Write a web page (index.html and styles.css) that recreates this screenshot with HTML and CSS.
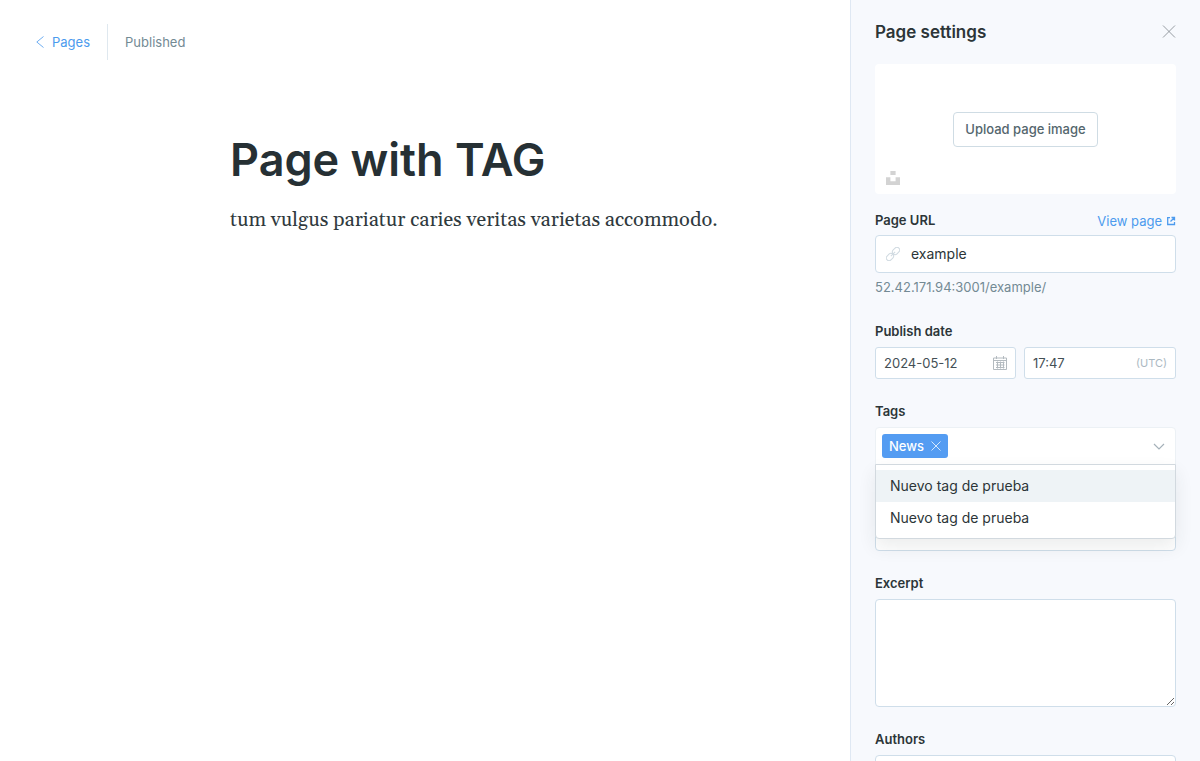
FILE: index.html
```html
<!DOCTYPE html>
<html lang="en">
<head>
<meta charset="utf-8">
<meta name="viewport" content="width=device-width, initial-scale=1">
<title>Page with TAG</title>
<link rel="stylesheet" href="styles.css">
</head>
<body>
<div class="app">
  <main class="editor">
    <header class="editor-header">
      <a class="back-link" href="#">
        <svg class="back-icon" viewBox="0 0 8 12" aria-hidden="true"><path d="M7.500 .5 .8 6l6.700 5.500"/></svg>
        Pages
      </a>
      <span class="status">Published</span>
    </header>
    <article class="post">
      <h1 class="post-title">Page with TAG</h1>
      <p class="post-body">tum vulgus pariatur caries veritas varietas accommodo.</p>
    </article>
  </main>

  <aside class="settings">
    <header class="settings-header">
      <h2 class="settings-title">Page settings</h2>
      <button class="close-button" type="button" aria-label="Close">
        <svg class="close-icon" viewBox="0 0 14 14" aria-hidden="true"><path d="M1 .5l12 12M13 .5l-12 12"/></svg>
      </button>
    </header>
    <form class="settings-form">
      <div class="uploader">
        <button class="upload-button" type="button">Upload page image</button>
        <button class="unsplash-button" type="button" aria-label="Unsplash">
          <svg class="unsplash-icon" viewBox="0 0 14 14" aria-hidden="true"><path d="M4.400 0h5.200v4H4.400zM0 6.200h4.400v4h5.200v-4H14V14H0z"/></svg>
        </button>
      </div>

      <div class="group">
        <div class="label-row">
          <label class="label" for="url">Page URL</label>
          <a class="view-link" href="#">View page
            <svg class="external-icon" viewBox="0 0 10 10" aria-hidden="true"><path d="M4 1.700H1.700v6.800h6.800V6M5.500 1.500h3v3M8.300 1.700 4.500 5.500"/></svg>
          </a>
        </div>
        <div class="field">
          <svg class="link-icon" viewBox="0 0 14 14" aria-hidden="true"><g transform="rotate(-45 7 7)"><rect x="-1.300" y="4.300" width="8" height="5.400" rx="2.700"/><rect x="7.300" y="4.300" width="8" height="5.400" rx="2.700"/><path d="M4 7h6"/></g></svg>
          <input class="field-input" id="url" type="text" value="example">
        </div>
        <p class="hint">52.42.171.94:3001/example/</p>
      </div>

      <div class="group">
        <label class="label" for="date">Publish date</label>
        <div class="date-row">
          <div class="field field-small">
            <input class="field-input" id="date" type="text" value="2024-05-12">
            <svg class="calendar-icon" viewBox="0 0 14 14" aria-hidden="true"><path d="M.5 2h13v11.500H.5zM.5 4.500h13M3.500 0v3M10.500 0v3M3 6.500h8.500M3 9h8.500M3 11.500h8.500M4.500 5.500v7M7.500 5.500v7M10.500 5.500v7"/></svg>
          </div>
          <div class="field field-small">
            <input class="field-input" type="text" value="17:47" aria-label="Time">
            <span class="timezone">(UTC)</span>
          </div>
        </div>
      </div>

      <div class="group">
        <label class="label" for="tags">Tags</label>
        <div class="field field-tags">
          <span class="tag">News
            <button class="tag-remove" type="button" aria-label="Remove News">
              <svg class="tag-remove-icon" viewBox="0 0 10 10" aria-hidden="true"><path d="M.5 .5l9 9M9.500 .5l-9 9"/></svg>
            </button>
          </span>
          <input class="field-input" id="tags" type="text">
          <svg class="chevron-icon" viewBox="0 0 12 7" aria-hidden="true"><path d="M1 1l5 5 5-5"/></svg>
          <ul class="menu" role="listbox">
            <li class="option option-active" role="option" aria-selected="true">Nuevo tag de prueba</li>
            <li class="option" role="option" aria-selected="false">Nuevo tag de prueba</li>
          </ul>
        </div>
      </div>

      <div class="group group-access">
        <select class="field access-select" aria-label="Page access"></select>
      </div>

      <div class="group">
        <label class="label" for="excerpt">Excerpt</label>
        <textarea class="field excerpt" id="excerpt"></textarea>
      </div>

      <div class="group">
        <label class="label" for="authors">Authors</label>
        <div class="field"><input class="field-input" id="authors" type="text"></div>
      </div>
    </form>
  </aside>
</div>
</body>
</html>
```
FILE: styles.css
```css
* { box-sizing: border-box; }

body {
  margin: 0;
  background: #fff;
  color: #2c3538;
  font-family: Inter, "Liberation Sans", sans-serif;
  font-size: 13px;
  line-height: 16px;
}

h1, h2, p, ul { margin: 0; padding: 0; }
a { text-decoration: none; }
button { margin: 0; padding: 0; border: 0; background: none; font: inherit; cursor: pointer; }
svg { display: block; flex: none; fill: none; stroke: currentColor; }

.app {
  display: grid;
  grid-template-columns: 1fr 350px;
  height: 100vh;
  overflow: hidden;
}

.editor-header {
  display: flex;
  align-items: center;
  padding: 24px 36px;
}
.back-link {
  display: flex;
  align-items: center;
  gap: 8px;
  height: 36px;
  padding-right: 17px;
  border-right: 1px solid #dfe8ef;
  color: #4c9bee;
}
.back-icon { width: 8px; height: 12px; opacity: .8; }
.status { padding-left: 17px; color: #738a94; }

.post { padding: 46px 24px 0 230px; }
.post-title {
  color: #263034;
  font-size: 45px;
  font-weight: 600;
  line-height: 60px;
}
.post-body {
  margin-top: 14px;
  color: #303a3e;
  font-family: Georgia, Gelasio, "Liberation Serif", serif;
  font-size: 20px;
  line-height: 32px;
}

.settings {
  padding: 16px 24px 0;
  border-left: 1px solid #dfe8f3;
  background: #f7f9fd;
  overflow: hidden;
}
.settings-header {
  display: flex;
  align-items: center;
  justify-content: space-between;
  height: 32px;
  margin-bottom: 16px;
}
.settings-title { font-size: 17px; font-weight: 600; line-height: 24px; }
.close-icon { width: 14px; height: 14px; color: #7d878b; stroke-width: .8; }

.uploader {
  position: relative;
  display: flex;
  align-items: center;
  justify-content: center;
  height: 130px;
  margin-bottom: 18px;
  border-radius: 4px;
  background: #fff;
}
.upload-button {
  height: 35px;
  padding: 0 11px;
  border: 1px solid #cfdce4;
  border-radius: 4px;
  color: #54666d;
  font-weight: 500;
}
.unsplash-button { position: absolute; left: 11px; bottom: 9px; }
.unsplash-icon { width: 14px; height: 14px; fill: #d3d3d3; stroke: none; }

.group { margin-bottom: 24px; }
.label { display: block; margin-bottom: 8px; font-weight: 600; line-height: 16px; }
.label-row { display: flex; justify-content: space-between; height: 23px; }
.view-link { display: flex; align-items: center; gap: 4px; height: 18px; color: #4c9bee; }
.external-icon { width: 10px; height: 10px; stroke-width: 1.3; }

.field {
  position: relative;
  display: flex;
  align-items: center;
  gap: 11px;
  width: 100%;
  height: 38px;
  padding: 0 10px;
  border: 1px solid #cfdeea;
  border-radius: 4px;
  background: #fff;
}
.field-input {
  flex: 1;
  width: 100%;
  min-width: 0;
  padding: 0;
  border: 0;
  outline: 0;
  background: none;
  color: #2c3538;
  font: inherit;
  font-size: 14px;
}
.link-icon { width: 14px; height: 14px; color: #d0dae1; }
.hint { margin-top: 4px; margin-bottom: 26px; color: #738a94; line-height: 20px; }

.date-row {
  display: grid;
  grid-template-columns: minmax(0, 141fr) minmax(0, 152fr);
  gap: 8px;
}
.field-small { height: 32px; padding: 0 8px; border-radius: 3px; }
.field-small .field-input { color: #444f55; font-size: 13px; }
.calendar-icon { width: 14px; height: 14px; color: #b4bbc0; stroke-width: 1; }
.timezone { color: #abb9c2; font-size: 11px; }

.field-tags {
  gap: 4px;
  padding: 0 10px 0 6px;
  border-color: #ecf1f5;
  border-radius: 4px 4px 0 0;
}
.tag {
  display: flex;
  align-items: center;
  gap: 7px;
  height: 24px;
  padding: 0 7px;
  border-radius: 3px;
  background: #549cf2;
  color: #fff;
  font-weight: 500;
}
.tag-remove { color: #d5e7fc; }
.tag-remove-icon { width: 10px; height: 10px; }
.chevron-icon { width: 12px; height: 7px; color: #a5b1b9; stroke-width: 1.2; }

.menu {
  position: absolute;
  z-index: 1;
  top: 100%;
  left: -1px;
  right: -1px;
  padding: 5px 0 4px;
  border: 1px solid #d2d9df;
  border-radius: 0 0 4px 4px;
  background: #fff;
  box-shadow: 0 8px 18px rgba(40, 50, 60, .09);
  list-style: none;
}
.option { padding: 8px 14px; font-size: 14px; line-height: 16px; }
.option-active { background: #eef3f6; }

.group-access { padding-top: 24px; }
.access-select { appearance: none; }
.excerpt { display: block; height: 108px; resize: vertical; outline: 0; }
```
